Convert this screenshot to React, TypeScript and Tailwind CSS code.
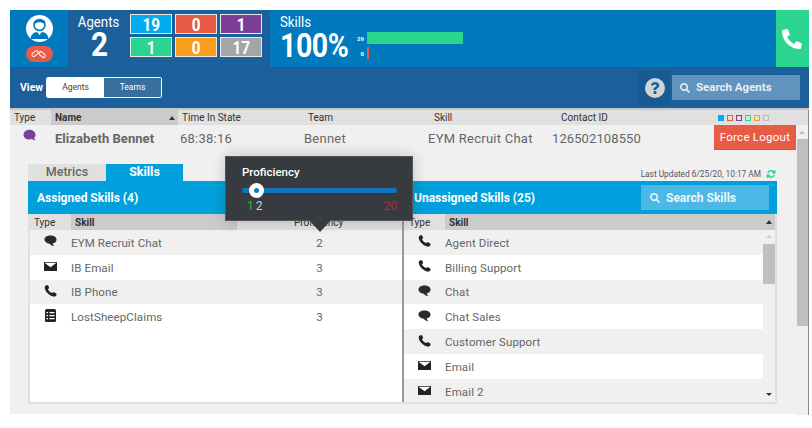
import React from "react";
import { FaPhoneAlt, FaComment, FaSearch, FaQuestion } from "react-icons/fa";

type IconKind = "phone" | "chat" | "mail" | "list";

function TypeIcon({ kind }: { kind: IconKind }) {
  if (kind === "phone")
    return (
      <svg width="13" height="12" viewBox="0 0 14 13" className="block">
        <path d="M2.4 0.3 L4.4 0.2 L5.6 3.2 L4.2 4.6 C5 6.4 6.8 8 9 8.8 L10.4 7.6 L13.6 9.4 L13.4 11.2 C12.8 12.4 11.4 12.9 9.8 12.5 C5.2 11.2 1.8 7.8 0.8 3.6 C0.5 2.2 1.2 0.9 2.4 0.3 Z" fill="#222" />
      </svg>
    );
  if (kind === "chat")
    return (
      <svg width="13" height="12" viewBox="0 0 14 13" className="block">
        <path d="M7 0.5 C10.8 0.5 13.6 2.2 13.6 5 C13.6 7.6 11.4 9 9.4 9.2 C9.6 10.4 10.4 11.4 11 12 C9 12 6.8 10.6 6 9.4 C2.8 9.2 0.4 7.6 0.4 5 C0.4 2.2 3.2 0.5 7 0.5 Z" fill="#2b2b2b" />
      </svg>
    );
  if (kind === "mail")
    return (
      <svg width="13" height="9" viewBox="0 0 13 9" className="block">
        <rect width="13" height="9" fill="#222" />
        <path d="M0.5 0.8 L12.5 0.8 L6.5 5.2 Z" fill="#fff" />
      </svg>
    );
  return (
    <svg width="11" height="13" viewBox="0 0 11 13" className="block">
      <rect width="11" height="13" rx="1.5" fill="#222" />
      <path d="M1.5 3 h1.5 v1.2 h-1.5z M4.5 3 h5 v1.2 h-5z M1.5 6 h1.5 v1.2 h-1.5z M4.5 6 h5 v1.2 h-5z M1.5 9 h1.5 v1.2 h-1.5z M4.5 9 h5 v1.2 h-5z" fill="#fff" />
    </svg>
  );
}

function SkillRow({ kind, name, value, alt }: { kind: IconKind; name: string; value?: string; alt: boolean }) {
  return (
    <div className={`flex h-[24.8px] items-center text-[11.5px] tracking-[0.12px] text-[#666] ${alt ? "bg-[#f0f0f0]" : "bg-white"}`}>
      <div className="flex w-[41px] shrink-0 justify-center pb-[2px] pr-[1px]"><TypeIcon kind={kind} /></div>
      <div className="flex-1 pt-[2px]">{name}</div>
      {value !== undefined && <div className="w-[169px] pl-[4px] pt-[2px] text-center">{value}</div>}
    </div>
  );
}

function Stat({ bg, n }: { bg: string; n: string }) {
  return (
    <div className={`flex h-[20px] w-[42px] items-center justify-center border border-[#e8e8e8] text-[18px] font-bold text-white ${bg}`}>
      <span className="scale-x-[0.85]">{n}</span>
    </div>
  );
}

function Legend({ cls }: { cls: string }) {
  return <span className={`block h-[6px] w-[6px] border ${cls}`} />;
}

export default function App() {
  const font = { fontFamily: "Roboto, 'Liberation Sans', sans-serif" };
  return (
    <div style={font} className="h-[428px] w-[812px] overflow-hidden bg-white pl-[10px] pt-[10px]">
      <div className="relative w-[799px]">
        {/* Top header */}
        <div className="flex h-[57px] bg-[#0079bd]">
          <div className="flex w-[58px] shrink-0 flex-col items-center pt-[5px]">
            <div className="flex h-[27px] w-[27px] items-center justify-center overflow-hidden rounded-full bg-white">
              <svg width="27" height="27" viewBox="0 0 27 27">
                <circle cx="13.5" cy="10" r="5.5" fill="none" stroke="#0079bd" strokeWidth="1.6" />
                <path d="M8 10 C10 7 14 6 19 9 L19 6 C16 4 10 4 8 7 Z" fill="#0079bd" />
                <path d="M4.5 24 C5 19 8 17.5 11 17 L13.5 20 L16 17 C19 17.5 22 19 22.5 24 Z" fill="#0079bd" />
              </svg>
            </div>
            <div className="mt-[4px] flex h-[16px] w-[27px] items-center justify-center rounded-full bg-[#e85c46]">
              <svg width="16" height="10" viewBox="0 0 16 10" fill="none" stroke="#fff" strokeWidth="1">
                <rect x="0.8" y="3" width="7" height="3.4" rx="1.7" transform="rotate(-38 4 5)" />
                <rect x="8" y="3.6" width="7" height="3.4" rx="1.7" transform="rotate(38 11 5)" />
              </svg>
            </div>
          </div>
          <div className="flex w-[202px] shrink-0 bg-[#1b5f9b]">
            <div className="flex w-[62px] shrink-0 flex-col items-center pt-[4px] text-white">
              <div className="scale-x-[0.88] text-[15px] leading-[16px]">Agents</div>
              <div className="scale-x-[0.9] text-[33px] font-bold leading-[30px]">2</div>
            </div>
            <div className="grid grid-cols-[42px_42px_42px] content-start gap-x-[3px] gap-y-[3px] pt-[4px]">
              <Stat bg="bg-[#00aeef]" n="19" />
              <Stat bg="bg-[#e85c46]" n="0" />
              <Stat bg="bg-[#7b3f98]" n="1" />
              <Stat bg="bg-[#2bd48f]" n="1" />
              <Stat bg="bg-[#f99d1c]" n="0" />
              <Stat bg="bg-[#a3a5a8]" n="17" />
            </div>
          </div>
          <div className="flex w-[202px] shrink-0 border-r border-[#1b6fab] pl-[10px] text-white">
            <div className="flex w-[73px] shrink-0 flex-col pt-[4px]">
              <div className="origin-left scale-x-[0.88] text-[15px] leading-[16px]">Skills</div>
              <div className="origin-left scale-x-[0.84] text-[34px] font-bold leading-[30px] tracking-[-0.6px]">100%</div>
            </div>
            <div className="flex flex-col gap-[3px] pt-[22px]">
              <div className="flex h-[12px] items-center gap-[3px]">
                <span className="w-[11px] text-right text-[6px] font-bold">29</span>
                <span className="h-[12px] w-[96px] bg-[#2bd48f]" />
              </div>
              <div className="flex h-[12px] items-center gap-[3px]">
                <span className="w-[11px] text-right text-[6px] font-bold">0</span>
                <span className="h-[12px] w-[2px] bg-[#e85c46]" />
              </div>
            </div>
          </div>
          <div className="flex-1" />
          <div className="flex w-[33px] shrink-0 items-center justify-center bg-[#2bd48f] pr-[1px]">
            <FaPhoneAlt className="h-[20px] w-[20px] text-white" />
          </div>
        </div>

        {/* View bar */}
        <div className="flex h-[41px] items-center bg-[#1b5f9b] pl-[10px] pr-[9px]">
          <span className="text-[10.5px] font-bold text-white">View</span>
          <div className="ml-[3px] flex h-[21px] w-[116px] overflow-hidden rounded-[2px] border border-white text-[8.5px]">
            <div className="flex w-[57px] items-center justify-center bg-white text-[#444]">Agents</div>
            <div className="flex flex-1 items-center justify-center bg-[#376f9f] text-white">Teams</div>
          </div>
          <div className="flex-1" />
          <div className="flex h-[36px] w-[31px] items-center justify-center bg-[#185a92]">
            <div className="flex h-[20px] w-[20px] items-center justify-center rounded-full bg-[#d2d3d5]">
              <FaQuestion className="h-[12px] w-[12px] text-[#1b5f9b]" />
            </div>
          </div>
          <div className="ml-[2px] flex h-[25px] w-[128px] items-center bg-[#6093bd] pl-[8px] text-[11.5px] font-bold text-[#e8eef4]">
            <FaSearch className="mr-[6px] h-[10px] w-[10px]" />
            <span className="pt-[1px]">Search Agents</span>
          </div>
        </div>

        <div className="h-[2px] w-full bg-[#c4c8cc]" />

        {/* Body */}
        <div className="flex">
          <div className="w-[786px] shrink-0">
            <div className="flex h-[15px] items-center bg-[#e0e0e0] text-[10px] text-[#333]">
              <div className="w-[41px] pl-[4px]">Type</div>
              <div className="flex h-full w-[127px] items-center justify-between bg-[#cbcbcb] pl-[4px] pr-[3px] font-bold">
                Name
                <span className="h-0 w-0 border-x-[3px] border-b-[4px] border-x-transparent border-b-[#333]" />
              </div>
              <div className="w-[130px] pl-[4px]">Time In State</div>
              <div className="w-[126px]">Team</div>
              <div className="w-[127px]">Skill</div>
              <div className="w-[157px]">Contact ID</div>
              <div className="flex gap-[3px]">
                <Legend cls="border-[#00aeef] bg-[#00aeef]" />
                <Legend cls="border-[#e85c46]" />
                <Legend cls="border-[#7b3f98]" />
                <Legend cls="border-[#2bd48f]" />
                <Legend cls="border-[#f99d1c]" />
                <Legend cls="border-[#bbb]" />
              </div>
            </div>

            <div className="h-[289px] bg-[#f0f0f0]">
              <div className="flex h-[25px] items-center text-[13px] tracking-[0.25px] text-[#666]">
                <div className="flex w-[41px] justify-center pb-[5px] pr-[2px]">
                  <FaComment className="h-[12px] w-[13px] -scale-x-100 text-[#7b3f98]" />
                </div>
                <div className="w-[127px] pl-[4px] pt-[2px] font-bold tracking-[0.05px]">Elizabeth Bennet</div>
                <div className="w-[126px] pl-[2px] pt-[2px]">68:38:16</div>
                <div className="w-[124px] pt-[2px]">Bennet</div>
                <div className="w-[124px] pt-[2px]">EYM Recruit Chat</div>
                <div className="w-[162px] pt-[2px] tracking-[0.1px]">126502108550</div>
                <div className="flex h-[25px] w-[82px] items-center justify-center border-b border-[#d9503c] bg-[#e85c46] pt-[2px] text-[11.5px] text-white">Force Logout</div>
              </div>

              <div className="ml-[18px] mt-[14px] flex h-[17px] text-[12.5px]">
                <div className="flex w-[78px] items-center justify-center bg-[#e0e0e0] font-medium text-[#666]">Metrics</div>
                <div className="flex w-[77px] items-center justify-center bg-[#00a0dc] font-bold text-white">Skills</div>
              </div>

              <div className="absolute right-[33px] top-[158px] flex items-center gap-[5px] text-[8.3px] text-[#555]">
                Last Updated 6/25/20, 10:17 AM
                <svg width="10" height="10" viewBox="0 0 24 24" fill="none" stroke="#2bd48f" strokeWidth="3.5">
                  <path d="M20 8 A9 9 0 0 0 4 10 M4 16 A9 9 0 0 0 20 14" />
                  <path d="M21 3 V9 H15 M3 21 V15 H9" />
                </svg>
              </div>

              <div className="ml-[18px] w-[749px] bg-[#e0e0e0] pb-[2px]">
                <div className="flex h-[33px] items-center bg-[#00a0dc] text-[12px] font-bold text-white">
                  <div className="w-[386px] pl-[9px]">Assigned Skills (4)</div>
                  <div className="flex-1">Unassigned Skills (25)</div>
                  <div className="mr-[8px] flex h-[25px] w-[128px] items-center bg-[#4db8e6] pl-[9px] text-[12px] text-[#eaf6fb]">
                    <FaSearch className="mr-[6px] h-[10px] w-[10px]" />
                    Search Skills
                  </div>
                </div>
                <div className="flex">
                  {/* Assigned */}
                  <div className="w-[374px] shrink-0">
                    <div className="flex h-[16px] items-center bg-[#e0e0e0] text-[10px] text-[#333]">
                      <div className="w-[43px] pl-[6px]">Type</div>
                      <div className="flex h-full w-[166px] items-center bg-[#cbcbcb] pl-[4px] font-bold">Skill</div>
                      <div className="flex-1 pl-[57px]">Proficiency</div>
                    </div>
                    <div className="ml-[2px] h-[172px] bg-white">
                      <SkillRow kind="chat" name="EYM Recruit Chat" value="2" alt />
                      <SkillRow kind="mail" name="IB Email" value="3" alt={false} />
                      <SkillRow kind="phone" name="IB Phone" value="3" alt />
                      <SkillRow kind="list" name="LostSheepClaims" value="3" alt={false} />
                    </div>
                  </div>
                  <div className="w-[2px] shrink-0 bg-[#999]" />
                  {/* Unassigned */}
                  <div className="flex-1 pr-[2px]">
                    <div className="flex h-[16px] items-center bg-[#e0e0e0] text-[10px] text-[#333]">
                      <div className="w-[41px] pl-[5px]">Type</div>
                      <div className="flex h-full flex-1 items-center justify-between bg-[#cbcbcb] pl-[4px] pr-[3px] font-bold">
                        Skill
                        <span className="h-0 w-0 border-x-[3px] border-b-[4px] border-x-transparent border-b-[#333]" />
                      </div>
                    </div>
                    <div className="relative h-[172px] overflow-hidden bg-[#f0f0f0]">
                      <div className="w-[359px]">
                        <SkillRow kind="phone" name="Agent Direct" alt />
                        <SkillRow kind="phone" name="Billing Support" alt={false} />
                        <SkillRow kind="chat" name="Chat" alt />
                        <SkillRow kind="chat" name="Chat Sales" alt={false} />
                        <SkillRow kind="phone" name="Customer Support" alt />
                        <SkillRow kind="mail" name="Email" alt={false} />
                        <SkillRow kind="mail" name="Email 2" alt />
                      </div>
                      <div className="absolute right-0 top-[14px] h-[40px] w-[12px] bg-[#bfbfbf]" />
                      <span className="absolute right-[3px] top-[5px] h-0 w-0 border-x-[3px] border-b-[3px] border-x-transparent border-b-[#ccc]" />
                      <span className="absolute bottom-[6px] right-[3px] h-0 w-0 border-x-[3px] border-t-[3px] border-x-transparent border-t-[#333]" />
                    </div>
                  </div>
                </div>
              </div>
            </div>
          </div>

          {/* Page scrollbar */}
          <div className="relative h-[305px] flex-1 border-r border-[#8a8a8a] bg-[#f0f0f0]">
            <div className="h-[15px] bg-[#e0e0e0]" />
            <span className="absolute left-[3px] top-[21px] h-0 w-0 border-x-[3px] border-b-[3px] border-x-transparent border-b-[#bbb]" />
            <div className="absolute left-[1px] right-0 top-[29px] h-[187px] bg-[#bfbfbf]" />
          </div>
        </div>

        {/* Proficiency popover */}
        <div className="absolute left-[215px] top-[146px] h-[65px] w-[188px] border border-[#555] bg-[#373a3f] px-[16px] pt-[8px] shadow-[0_0_14px_rgba(0,0,0,0.2)]">
          <div className="text-[11.5px] font-medium leading-[14px] text-white">Proficiency</div>
          <div className="relative mt-[9px] -mr-px h-[5px] rounded-full bg-[#0f75bc]">
            <div className="absolute left-[7px] top-[-5px] flex h-[15px] w-[15px] items-center justify-center rounded-full bg-white">
              <div className="h-[5px] w-[5px] rounded-full bg-[#0f75bc]" />
            </div>
          </div>
          <div className="relative mt-[7px] flex justify-between text-[12px] leading-[13px]">
            <span className="ml-[5px] text-[#d0d0d0]"><span className="mr-[2px] text-[#3cb54a]">1</span>2</span>
            <span className="-mr-px text-[#c4203a]">20</span>
          </div>
          <span className="absolute bottom-[-12px] left-[83px] h-0 w-0 border-x-[11px] border-t-[12px] border-x-transparent border-t-[#373a3f]" />
        </div>
      </div>
    </div>
  );
}
